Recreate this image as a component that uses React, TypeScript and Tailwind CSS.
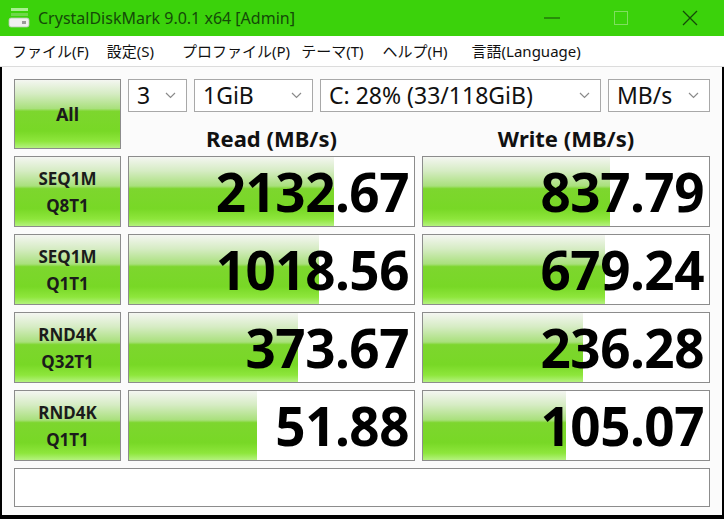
import React from "react";

const barBg =
  "linear-gradient(to bottom, #f4f6f1 0%, #d6ecc4 20%, #a9e07c 42%, #7dd62e 46%, #78d826 75%, #8ee63c 90%, #b4f27e 100%)";

function Chevron() {
  return (
    <svg width="11" height="7" viewBox="0 0 11 7" className="shrink-0">
      <path d="M1 1 L5.5 5.5 L10 1" fill="none" stroke="#8a8a8a" strokeWidth="1.2" />
    </svg>
  );
}

function Combo({ w, text }: { w?: string; text: string }) {
  return (
    <div
      className={`h-[33px] flex items-center justify-between border border-[#a8a8a8] bg-white pl-[8px] pr-[10px] text-[23px] text-[#111] ${w ?? "flex-1"}`}
    >
      <span className="leading-none whitespace-nowrap">{text}</span>
      <Chevron />
    </div>
  );
}

function Label({ a, b }: { a: string; b?: string }) {
  return (
    <div
      className="flex flex-col items-center justify-center border border-[#8c8c8c] font-bold text-[#1b1b1b] text-[17px] leading-[27px]"
      style={{ background: barBg }}
    >
      <span>{a}</span>
      {b && <span>{b}</span>}
    </div>
  );
}

function Cell({ value }: { value: number }) {
  const pct = 16.4 + 16.7 * Math.log10(value);
  return (
    <div className="relative border border-[#8c8c8c] bg-white overflow-hidden">
      <div className="absolute left-0 top-0 bottom-0" style={{ width: `${pct}%`, background: barBg }} />
      <div className="relative h-full flex items-center justify-end pr-[5px] text-[53px] font-bold text-black leading-none tracking-[-0.5px]">
        {value.toFixed(2)}
      </div>
    </div>
  );
}

const rows: [string, string, number, number][] = [
  ["SEQ1M", "Q8T1", 2132.67, 837.79],
  ["SEQ1M", "Q1T1", 1018.56, 679.24],
  ["RND4K", "Q32T1", 373.67, 236.28],
  ["RND4K", "Q1T1", 51.88, 105.07],
];

export default function App() {
  return (
    <div
      className="w-[724px] h-[519px] flex flex-col bg-white overflow-hidden"
      style={{ fontFamily: '"Noto Sans", "Noto Sans CJK JP", sans-serif' }}
    >
      {/* Title bar */}
      <div className="h-[36px] bg-[#3bd20b] flex items-center shrink-0">
        <svg width="24" height="24" viewBox="0 0 24 24" className="ml-[7px]">
          <rect x="4" y="2" width="17" height="3" fill="#a8f090" />
          <rect x="4" y="7" width="17" height="3" fill="#6fd84a" />
          <rect x="2" y="12" width="20" height="9" rx="2" fill="#f0f0f0" stroke="#b8c8b0" strokeWidth="0.8" />
          <rect x="15" y="15" width="4" height="3" fill="#9a9a9a" />
        </svg>
        <span className="ml-[7px] text-[16px] text-[#144a08] whitespace-nowrap">
          CrystalDiskMark 9.0.1 x64 [Admin]
        </span>
        <div className="ml-auto flex h-full">
          <div className="w-[69px] h-full flex items-center justify-center">
            <svg width="16" height="2" viewBox="0 0 16 2">
              <rect x="0" y="0.5" width="16" height="1" fill="#144a08" />
            </svg>
          </div>
          <div className="w-[69px] h-full flex items-center justify-center">
            <svg width="14" height="14" viewBox="0 0 14 14">
              <rect x="0.5" y="0.5" width="13" height="13" fill="none" stroke="#7fdf5f" strokeWidth="1" />
            </svg>
          </div>
          <div className="w-[69px] h-full flex items-center justify-center">
            <svg width="16" height="16" viewBox="0 0 16 16">
              <path d="M1 1 L15 15 M15 1 L1 15" stroke="#144a08" strokeWidth="1.3" />
            </svg>
          </div>
        </div>
      </div>

      {/* Menu bar */}
      <div className="h-[31px] shrink-0 flex items-center border-b border-[#dcdcdc] text-[15px] text-[#111] bg-white whitespace-nowrap">
        <span className="ml-[12px]">ファイル(F)</span>
        <span className="ml-[18px]">設定(S)</span>
        <span className="ml-[28px]">プロファイル(P)</span>
        <span className="ml-[11px]">テーマ(T)</span>
        <span className="ml-[19px]">ヘルプ(H)</span>
        <span className="ml-[24px]">言語(Language)</span>
      </div>

      {/* Body */}
      <div className="flex-1 bg-[#fbfbfb] border-l-2 border-r-2 border-b-4 border-black pl-[12px] pt-[12px]">
        <div className="grid grid-cols-[107px_287px_288px] grid-rows-[33px_30px_71px_71px_71px_71px_39px] gap-x-[7px] gap-y-[7px]">
          <div
            className="row-span-2 flex items-center justify-center border border-[#8c8c8c] font-bold text-[18px] text-[#1b1b1b]"
            style={{ background: barBg }}
          >
            All
          </div>
          <div className="col-span-2 flex gap-[7px]">
            <Combo w="w-[59px]" text="3" />
            <Combo w="w-[119px]" text="1GiB" />
            <Combo w="w-[281px]" text="C: 28% (33/118GiB)" />
            <Combo text="MB/s" />
          </div>
          <div className="pt-[8px] flex items-center justify-center font-bold text-[22px] text-[#111] leading-none">
            Read (MB/s)
          </div>
          <div className="pt-[8px] flex items-center justify-center font-bold text-[22px] text-[#111] leading-none">
            Write (MB/s)
          </div>
          {rows.map(([a, b, r, w], i) => (
            <React.Fragment key={i}>
              <Label a={a} b={b} />
              <Cell value={r} />
              <Cell value={w} />
            </React.Fragment>
          ))}
          <div className="col-span-3 border border-[#8c8c8c] bg-white" />
        </div>
      </div>
    </div>
  );
}
